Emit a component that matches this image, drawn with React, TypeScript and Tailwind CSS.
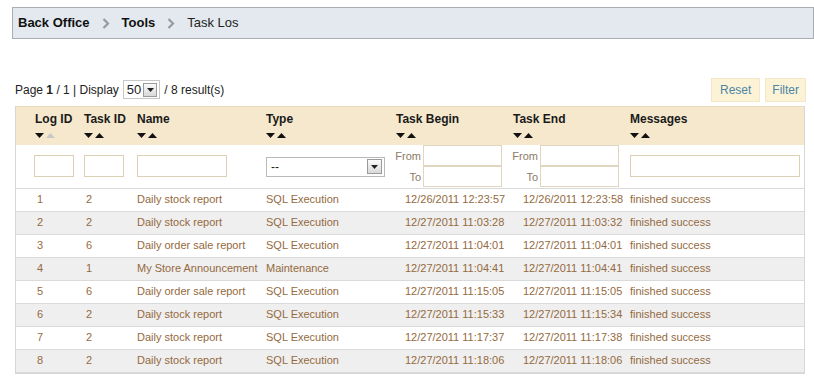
import React from 'react'

type Row = { log: number; task: number; name: string; type: string; begin: string; end: string; msg: string }

const ROWS: Row[] = [
  { log: 1, task: 2, name: 'Daily stock report', type: 'SQL Execution', begin: '12/26/2011 12:23:57', end: '12/26/2011 12:23:58', msg: 'finished success' },
  { log: 2, task: 2, name: 'Daily stock report', type: 'SQL Execution', begin: '12/27/2011 11:03:28', end: '12/27/2011 11:03:32', msg: 'finished success' },
  { log: 3, task: 6, name: 'Daily order sale report', type: 'SQL Execution', begin: '12/27/2011 11:04:01', end: '12/27/2011 11:04:01', msg: 'finished success' },
  { log: 4, task: 1, name: 'My Store Announcement', type: 'Maintenance', begin: '12/27/2011 11:04:41', end: '12/27/2011 11:04:41', msg: 'finished success' },
  { log: 5, task: 6, name: 'Daily order sale report', type: 'SQL Execution', begin: '12/27/2011 11:15:05', end: '12/27/2011 11:15:05', msg: 'finished success' },
  { log: 6, task: 2, name: 'Daily stock report', type: 'SQL Execution', begin: '12/27/2011 11:15:33', end: '12/27/2011 11:15:34', msg: 'finished success' },
  { log: 7, task: 2, name: 'Daily stock report', type: 'SQL Execution', begin: '12/27/2011 11:17:37', end: '12/27/2011 11:17:38', msg: 'finished success' },
  { log: 8, task: 2, name: 'Daily stock report', type: 'SQL Execution', begin: '12/27/2011 11:18:06', end: '12/27/2011 11:18:06', msg: 'finished success' },
]

/** small sort arrows under each header */
function SortArrows({ upDisabled = false }: { upDisabled?: boolean }) {
  return (
    <div className="flex items-center gap-[2px] mt-[6px] h-[6px]">
      <svg width="9" height="5" viewBox="0 0 9 5"><polygon points="0,0 9,0 4.5,5" fill="#111" /></svg>
      <svg width="9" height="5" viewBox="0 0 9 5"><polygon points="0,5 9,5 4.5,0" fill={upDisabled ? '#c8c8c8' : '#111'} /></svg>
    </div>
  )
}

function Chevron() {
  return (
    <svg width="8" height="11" viewBox="0 0 8 11" className="mx-[12px]">
      <path d="M1.5 1 L6 5.5 L1.5 10" fill="none" stroke="#9a9a9a" strokeWidth="2.2" />
    </svg>
  )
}

function DropArrow({ size = 13 }: { size?: number }) {
  return (
    <span
      className="flex items-center justify-center border border-[#9b9b9b] bg-gradient-to-b from-[#fafafa] to-[#d9d9d9]"
      style={{ width: size, height: size }}
    >
      <svg width="7" height="4" viewBox="0 0 7 4"><polygon points="0,0 7,0 3.5,4" fill="#222" /></svg>
    </span>
  )
}

const inputCls = 'block h-[22px] border border-[#dcd0b4] bg-white'

export default function App() {
  return (
    <div className="w-[814px] h-[388px] bg-white font-['Liberation_Sans',Arial,sans-serif] text-[12px] text-[#222] overflow-hidden">
      {/* ── breadcrumb ── */}
      <div className="pt-[7px] pl-[12px]">
        <div className="h-[32px] border border-[#a9aeb2] bg-[#e3e9ee] flex items-center pl-[5px] text-[13px]">
          <span className="font-bold text-[#111]">Back Office</span>
          <Chevron />
          <span className="font-bold text-[#111]">Tools</span>
          <Chevron />
          <span className="text-[#222]">Task Los</span>
        </div>
      </div>

      {/* ── pager + buttons ── */}
      <div className="flex items-end justify-between pl-[15px] pr-[8px] mt-[39px] h-[25px]">
        <div className="flex items-center pb-[4px] text-[12px]">
          <span>Page <b>1</b> / 1 | Display</span>
          <span className="ml-[4px] mr-[4px] flex items-center gap-[2px] border border-[#c7c7c7] h-[19px] pl-[3px] pr-[2px]">
            <span className="text-[13px] leading-none">50</span>
            <DropArrow size={14} />
          </span>
          <span>/ 8 result(s)</span>
        </div>
        <div className="flex gap-[5px] mb-[1px]">
          <button className="h-[24px] px-[8px] bg-[#fcf3d6] border border-[#f3e7c6] text-[#4a86a6] text-[12px]">Reset</button>
          <button className="h-[24px] px-[6px] bg-[#fcf3d6] border border-[#f3e7c6] text-[#4a86a6] text-[12px]">Filter</button>
        </div>
      </div>

      {/* ── table ── */}
      <div className="ml-[15px] mt-[3px] w-[790px] border border-[#d6d6d6] border-t-[#e8dcc2]">
        <table className="w-full table-fixed border-collapse">
          <colgroup>
            <col className="w-[64px]" />
            <col className="w-[53px]" />
            <col className="w-[129px]" />
            <col className="w-[130px]" />
            <col className="w-[117px]" />
            <col className="w-[117px]" />
            <col />
          </colgroup>
          <thead>
            <tr className="bg-[#f5e8cd] h-[38px] align-top">
              {[
                ['Log ID', 'pl-[19px]', true],
                ['Task ID', 'pl-[4px]', false],
                ['Name', 'pl-[4px]', false],
                ['Type', 'pl-[4px]', false],
                ['Task Begin', 'pl-[4px]', false],
                ['Task End', 'pl-[4px]', false],
                ['Messages', 'pl-[4px]', false],
              ].map(([label, pad, dis]) => (
                <th key={label as string} className={`${pad} pt-[5px] text-left font-bold text-[12px] text-[#1a1a1a]`}>
                  <div className="leading-[14px]">{label}</div>
                  <SortArrows upDisabled={dis as boolean} />
                </th>
              ))}
            </tr>
          </thead>
          <tbody>
            <tr className="h-[43px] border-b border-[#d9d9d9]">
              <td className="pl-[18px]"><span className={`${inputCls} w-[40px]`} /></td>
              <td className="pl-[4px]"><span className={`${inputCls} w-[40px]`} /></td>
              <td className="pl-[4px]"><span className={`${inputCls} w-[90px]`} /></td>
              <td className="pl-[4px]">
                <span className="flex items-center justify-between w-[119px] h-[20px] border border-[#b9b9b9] bg-white pl-[4px] pr-[2px] mt-[1px]">
                  <span className="text-[12px] leading-none">--</span>
                  <DropArrow size={15} />
                </span>
              </td>
              {[0, 1].map((i) => (
                <td key={i} className="p-0">
                  {['From', 'To'].map((l) => (
                    <div key={l} className="flex items-center h-[21px]">
                      <span className="w-[31px] pr-[2px] text-right text-[11px] text-[#8a7b66]">{l}</span>
                      <span className="block w-[79px] h-[21px] border border-[#e0d6c0] bg-white" />
                    </div>
                  ))}
                </td>
              ))}
              <td className="pl-[4px]"><span className={`${inputCls} w-[170px]`} /></td>
            </tr>
            {ROWS.map((r, i) => (
              <tr
                key={r.log}
                className={`h-[23px] text-[11px] text-[#946a40] border-b border-[#dadada] ${i % 2 === 1 ? 'bg-[#efefef]' : 'bg-white'}`}
              >
                <td className="pl-[21px]">{r.log}</td>
                <td className="pl-[6px]">{r.task}</td>
                <td className="pl-[4px] whitespace-nowrap">{r.name}</td>
                <td className="pl-[4px] whitespace-nowrap">{r.type}</td>
                <td className="pl-[13px] whitespace-nowrap">{r.begin}</td>
                <td className="pl-[14px] whitespace-nowrap">{r.end}</td>
                <td className="pl-[4px] whitespace-nowrap">{r.msg}</td>
              </tr>
            ))}
          </tbody>
        </table>
      </div>
    </div>
  )
}
